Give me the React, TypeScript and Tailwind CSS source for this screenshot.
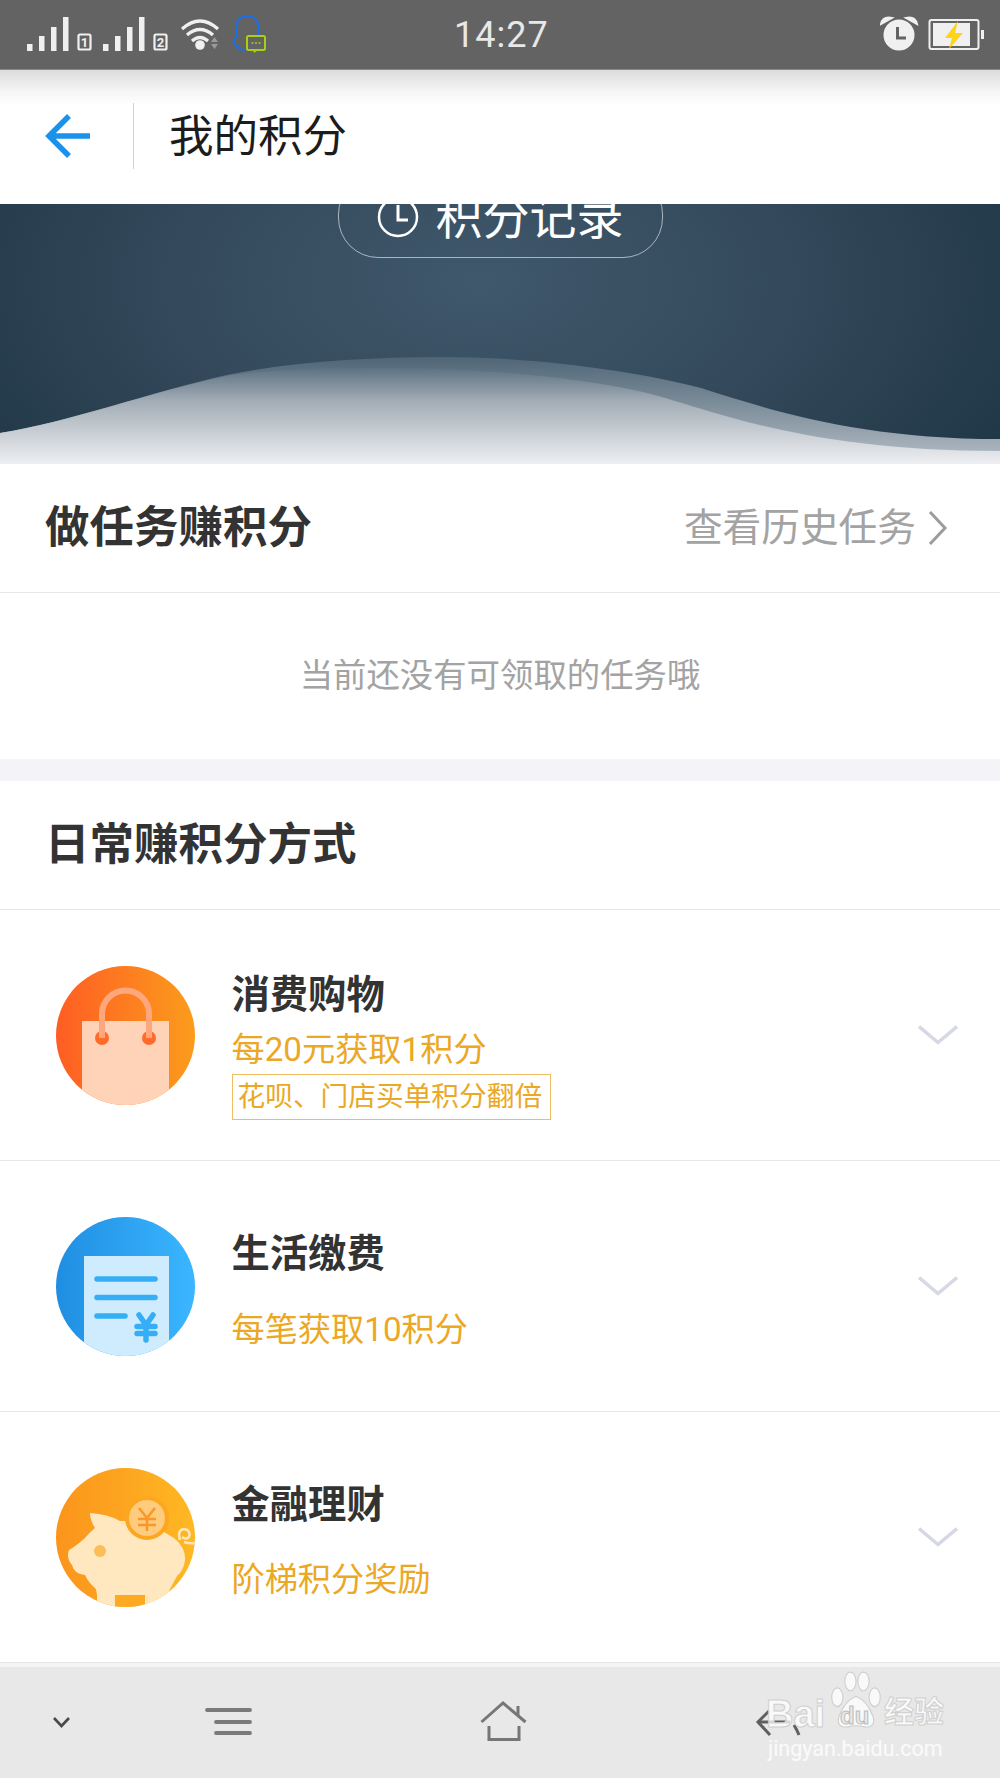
import type { ReactNode } from 'react'

const FONT = 'font-[Roboto,"Noto_Sans_CJK_SC",sans-serif]'

function StatusBar() {
  return (
    <div className="relative flex h-[70px] shrink-0 items-center justify-between bg-[#636363] border-b border-[#8a8a8a]">
      <svg width="280" height="69" viewBox="0 0 280 69" className="shrink-0">
        {[0, 76].map((dx, n) => (
          <g key={dx} transform={`translate(${dx} 0)`} fill="#f0f0f0">
            <rect x="27" y="44" width="5.5" height="7" />
            <rect x="39" y="36" width="5.5" height="15" />
            <rect x="51" y="27" width="5.5" height="24" />
            <rect x="63" y="17" width="5.5" height="34" />
            <rect x="78.5" y="34.5" width="12" height="15" rx="1.5" fill="none" stroke="#f0f0f0" strokeWidth="2.2" />
            <text x="84.5" y="47" fontSize="13" fontWeight="700" textAnchor="middle" fontFamily="Roboto">
              {n + 1}
            </text>
          </g>
        ))}
        <g fill="none" stroke="#f0f0f0" strokeWidth="3.2">
          <path d="M182 29 Q200 13 218 29" />
          <path d="M187 35 Q200 24 213 35" />
          <path d="M192 41 Q200 34 208 41" />
        </g>
        <circle cx="200" cy="45" r="4.8" fill="#f0f0f0" />
        <path d="M211 42 L214.5 37 L218 42Z M211 44 L218 44 L214.5 49Z" fill="#9a9a9a" />
        <path
          d="M246 50 Q239 50 238 47 Q232 44 234 41 Q237 37 236 30 Q236 16 247 16 Q258 16 259 30 L259 36"
          fill="none"
          stroke="#1b6fe8"
          strokeWidth="2"
        />
        <rect x="247" y="36" width="18" height="14" rx="1.5" fill="#636363" stroke="#a8d013" strokeWidth="2" />
        <path d="M253 50 L254 53 L258 50Z" fill="#a8d013" />
        <path d="M251.5 43h2M255 43h2M258.5 43h2" stroke="#a8d013" strokeWidth="1.6" />
      </svg>
      <span className="absolute left-[454px] top-[13px] text-[36px] leading-[44px] tracking-[1px] text-[#e8e8e8] font-[Roboto,sans-serif]">
        14:27
      </span>
      <svg width="120" height="69" viewBox="880 0 120 69" className="shrink-0">
        <path d="M881 24 Q883 16 892 18 Z M906 18 Q915 16 917 24 Z" fill="#f0f0f0" stroke="#f0f0f0" strokeWidth="2" />
        <circle cx="899" cy="35" r="15.5" fill="#f0f0f0" />
        <path d="M897.5 27 V38 H906" fill="none" stroke="#636363" strokeWidth="3" />
        <rect x="929.5" y="20" width="49" height="29" rx="2" fill="none" stroke="#f0f0f0" strokeWidth="2" />
        <rect x="933" y="23" width="37" height="23" fill="#f0f0f0" />
        <rect x="981" y="30" width="3" height="9" fill="#f0f0f0" />
        <path d="M958 21 L945 38 H952 L949 49 L963 33 H955Z" fill="#fdd31b" />
      </svg>
    </div>
  )
}

function Header() {
  return (
    <div className="flex h-[134px] shrink-0 items-center bg-[linear-gradient(#dcdcdc,#f6f6f6_22px,#ffffff_36px)]">
      <div className="-mt-[2px] flex h-[66px] w-[134px] items-center justify-center border-r border-[#d2d2d2]">
        <svg width="46" height="46" viewBox="0 0 46 46" className="ml-[2px]">
          <path d="M45 23 H4 M24 3 L4 23 L24 43" fill="none" stroke="#1a91eb" strokeWidth="5.5" />
        </svg>
      </div>
      <span className="ml-[35px] text-[44.5px] leading-none text-[#1c1c1c]">我的积分</span>
    </div>
  )
}

function Banner() {
  return (
    <div className="relative h-[260px] shrink-0 overflow-hidden bg-[radial-gradient(ellipse_580px_330px_at_48%_30%,#40586c,#33495b_55%,#213848)]">
      <div className="relative z-10 mx-auto -mt-[30px] flex h-[84px] w-[325px] items-center justify-center gap-[17px] rounded-[40px] border border-[#a9b5bf] pt-[2px]">
        <svg width="42" height="42" viewBox="0 0 42 42">
          <circle cx="21" cy="21" r="19" fill="none" stroke="#ffffff" strokeWidth="2.5" />
          <path d="M21 9 V24 H31" fill="none" stroke="#ffffff" strokeWidth="3" />
        </svg>
        <span className="text-[47px] leading-none text-white">积分记录</span>
      </div>
      <svg width="1000" height="260" viewBox="0 0 1000 260" className="absolute inset-0">
        <defs>
          <linearGradient id="waveBack" x1="0" y1="153" x2="0" y2="250" gradientUnits="userSpaceOnUse">
            <stop offset="0" stopColor="#4f6677" />
            <stop offset="1" stopColor="#acb6bf" />
          </linearGradient>
          <linearGradient id="waveFront" x1="0" y1="164" x2="0" y2="260" gradientUnits="userSpaceOnUse">
            <stop offset="0" stopColor="#5e7282" />
            <stop offset="0.35" stopColor="#a3adb6" />
            <stop offset="1" stopColor="#eeeff2" />
          </linearGradient>
        </defs>
        <path
          d="M0 229 C70 218 150 188 227 171 C290 158 370 153 440 153 C540 153 640 168 701 184 C770 206 860 235 1000 235 V260 H0Z"
          fill="url(#waveBack)"
        />
        <path
          d="M0 229 C70 218 150 188 227 172 C270 165 330 164 383 164 C470 164 570 172 638 187 C700 200 790 247 1000 247 V260 H0Z"
          fill="url(#waveFront)"
        />
      </svg>
    </div>
  )
}

function Chevron() {
  return (
    <svg width="40" height="20" viewBox="0 0 40 20">
      <path d="M1 1.5 L20 17.5 L39 1.5" fill="none" stroke="#d6d8e4" strokeWidth="3.5" />
    </svg>
  )
}

function ShopIcon() {
  return (
    <svg width="139" height="139" viewBox="0 0 139 139">
      <defs>
        <linearGradient id="shopBg" x1="0" x2="1" y1="0" y2="0">
          <stop offset="0" stopColor="#ff5d23" />
          <stop offset="1" stopColor="#fb9c1c" />
        </linearGradient>
        <clipPath id="shopClip">
          <circle cx="69.5" cy="69.5" r="69.5" />
        </clipPath>
      </defs>
      <circle cx="69.5" cy="69.5" r="69.5" fill="url(#shopBg)" />
      <rect x="26" y="55" width="87" height="90" fill="#ffd3b8" clipPath="url(#shopClip)" />
      <circle cx="46" cy="72" r="7" fill="#ff6b28" />
      <circle cx="93" cy="72" r="7" fill="#ff6b28" />
      <path d="M46 72 V48 A23.5 23.5 0 0 1 93 48 V72" fill="none" stroke="#ffa77c" strokeWidth="6" />
    </svg>
  )
}

function BillIcon() {
  return (
    <svg width="139" height="139" viewBox="0 0 139 139">
      <defs>
        <linearGradient id="billBg" x1="0" x2="1" y1="0" y2="0">
          <stop offset="0" stopColor="#1f8ee2" />
          <stop offset="1" stopColor="#3bb6ff" />
        </linearGradient>
        <clipPath id="billClip">
          <circle cx="69.5" cy="69.5" r="69.5" />
        </clipPath>
      </defs>
      <circle cx="69.5" cy="69.5" r="69.5" fill="url(#billBg)" />
      <rect x="28" y="39" width="85" height="105" fill="#cfecff" clipPath="url(#billClip)" />
      <g fill="none" stroke="#35aef5" strokeWidth="5.5" strokeLinecap="round">
        <path d="M41 62 H99 M41 80.5 H99 M41 99 H69" />
        <path d="M83 98 L90 108 L97 98 M90 108 V123 M81 109.5 H99 M81 116.5 H99" />
      </g>
    </svg>
  )
}

function PigIcon() {
  return (
    <svg width="139" height="139" viewBox="0 0 139 139">
      <defs>
        <linearGradient id="pigBg" x1="0" x2="1" y1="0" y2="0">
          <stop offset="0" stopColor="#fb941c" />
          <stop offset="1" stopColor="#ffb823" />
        </linearGradient>
        <clipPath id="pigClip">
          <circle cx="69.5" cy="69.5" r="69.5" />
        </clipPath>
      </defs>
      <circle cx="69.5" cy="69.5" r="69.5" fill="url(#pigBg)" />
      <g clipPath="url(#pigClip)">
        <path
          d="M34 45 Q52 46 64 53 Q90 52 118 70 Q130 80 129 92 Q128 102 121 108 L113 123 V145 H41 V127 Q40 120 39 120 Q32 114 29 107 Q18 106 16 97 Q10 90 13 82 Q20 78 29 70 Q34 64 39 60 Q34 52 34 45Z"
          fill="#ffe8bf"
        />
        <rect x="59" y="127" width="30" height="14" fill="#fdaa20" />
        <path d="M124 72 Q121 62 128 61 Q135 62 133 69 Q130 72 126 69 M128 74 Q134 76 139 75" fill="none" stroke="#ffe8bf" strokeWidth="2.5" />
      </g>
      <circle cx="91" cy="50" r="22" fill="#fda61f" />
      <circle cx="91" cy="50" r="18" fill="#ffcb7c" />
      <path d="M83 40 L91 50 L99 40 M91 50 V63 M82 51 H100 M82 57 H100" fill="none" stroke="#f8982a" strokeWidth="2.6" />
      <circle cx="44" cy="83" r="6" fill="#fdbe5a" />
    </svg>
  )
}

function RewardRow({
  icon,
  title,
  titleTop,
  sub,
  subGap,
  tag
}: {
  icon: ReactNode
  title: string
  titleTop: string
  sub: string
  subGap: string
  tag?: string
}) {
  return (
    <div className="flex h-[251px] shrink-0 items-center border-b border-[#e6e6e6] pl-[55.5px] pr-[42px]">
      <div className="shrink-0">{icon}</div>
      <div className={`ml-[37px] flex flex-1 flex-col self-start ${titleTop}`}>
        <span className="text-[38.3px] leading-[46px] font-bold text-[#333333]">{title}</span>
        <span className={`text-[33.2px] leading-[40px] text-[#eba824] ${subGap}`}>{sub}</span>
        {tag && (
          <span className="mt-[4px] w-[319px] whitespace-nowrap border border-[#efbe64] pl-[5px] text-[27.7px] leading-[44px] text-[#eba824]">
            {tag}
          </span>
        )}
      </div>
      <div className="shrink-0">
        <Chevron />
      </div>
    </div>
  )
}

function NavBar() {
  return (
    <div className="relative h-[111px] shrink-0 bg-[#e8e8e8]">
      <svg width="1000" height="111" viewBox="0 1667 1000 111" className="block">
        <path d="M54 1718 L61.5 1726 L69 1718" fill="none" stroke="#4a4a4a" strokeWidth="2.6" />
        <g stroke="#7a7a7a" strokeWidth="3.8" strokeLinecap="round">
          <path d="M207 1710 H250 M216 1722 H250 M216 1733 H250" />
        </g>
        <g fill="none" stroke="#767676" strokeWidth="3">
          <path d="M481.5 1722 L503 1703 L525.5 1722" />
          <path d="M518 1706 V1716" />
          <path d="M489 1726 V1739.5 H519 V1726" />
        </g>
        <g fill="none" stroke="#5f5f5f" strokeWidth="3">
          <path d="M769 1711 L758 1722 L770 1735" />
          <path d="M758 1722 H790" />
          <path d="M794 1725 Q797 1730 799 1735" />
        </g>
      </svg>
      <BaiduMark />
    </div>
  )
}

function BaiduMark() {
  return (
    <div className="pointer-events-none absolute left-[766px] top-[4px] w-[182px] text-white/85">
      <svg width="56" height="60" viewBox="0 0 60 64" className="absolute left-[62px] top-0">
        <g fill="#ffffff" fillOpacity="0.75" stroke="#cfcfcf" strokeWidth="1.2">
          <ellipse cx="10" cy="28" rx="6" ry="10" />
          <ellipse cx="24" cy="11" rx="6" ry="10" />
          <ellipse cx="38" cy="11" rx="6" ry="10" />
          <ellipse cx="50" cy="28" rx="6" ry="10" />
          <path d="M30 27 Q42 32 48 48 Q52 60 40 60 Q30 57 20 60 Q8 60 12 48 Q18 32 30 27Z" />
        </g>
      </svg>
      <span className="absolute left-0 top-[22px] text-[38px] font-bold leading-[42px] text-white/75 [-webkit-text-stroke:1px_#cfcfcf] font-[Liberation_Sans,sans-serif]">
        Bai
      </span>
      <span className="absolute left-[74px] top-[31px] text-[24px] font-bold leading-[28px] text-[#e8e8e8] [-webkit-text-stroke:1px_#bdbdbd] font-[Liberation_Sans,sans-serif]">
        du
      </span>
      <span className="absolute left-[118px] top-[22px] text-[30px] font-bold leading-[38px] text-white/75 [-webkit-text-stroke:1px_#cfcfcf]">
        经验
      </span>
      <span className="absolute left-[2px] top-[65px] whitespace-nowrap text-[21.5px] leading-[26px] text-white/80 font-[Roboto,sans-serif]">
        jingyan.baidu.com
      </span>
    </div>
  )
}

export default function App() {
  return (
    <div className={`flex h-[1778px] w-[1000px] flex-col overflow-hidden bg-white ${FONT}`}>
      <StatusBar />
      <Header />
      <Banner />

      {/* task section */}
      <div className="flex h-[129px] shrink-0 items-center justify-between border-b border-[#e6e6e6] pl-[45px] pr-[52px]">
        <span className="text-[44.5px] font-bold leading-none text-[#333333]">做任务赚积分</span>
        <div className="flex items-center gap-[12px]">
          <span className="text-[38.7px] leading-none text-[#a3a3a3]">查看历史任务</span>
          <svg width="20" height="36" viewBox="0 0 20 36">
            <path d="M2 2 L17 18 L2 34" fill="none" stroke="#9c9c9c" strokeWidth="3" />
          </svg>
        </div>
      </div>
      <div className="flex h-[188px] shrink-0 items-center justify-center border-b-[22px] border-[#f4f4f8] text-[33.4px] text-[#a3a3a3]">
        当前还没有可领取的任务哦
      </div>

      {/* daily earning ways */}
      <div className="flex h-[129px] shrink-0 items-center border-b border-[#e6e6e6] pl-[45px]">
        <span className="text-[44.5px] font-bold leading-none text-[#333333]">日常赚积分方式</span>
      </div>
      <RewardRow
        icon={<ShopIcon />}
        title="消费购物"
        titleTop="pt-[62px]"
        sub="每20元获取1积分"
        subGap="mt-[12px]"
        tag="花呗、门店买单积分翻倍"
      />
      <RewardRow icon={<BillIcon />} title="生活缴费" titleTop="pt-[70px]" sub="每笔获取10积分" subGap="mt-[33px]" />
      <RewardRow icon={<PigIcon />} title="金融理财" titleTop="pt-[70px]" sub="阶梯积分奖励" subGap="mt-[32px]" />

      <div className="h-[4px] shrink-0 bg-[#f4f4f4]" />
      <NavBar />
    </div>
  )
}
